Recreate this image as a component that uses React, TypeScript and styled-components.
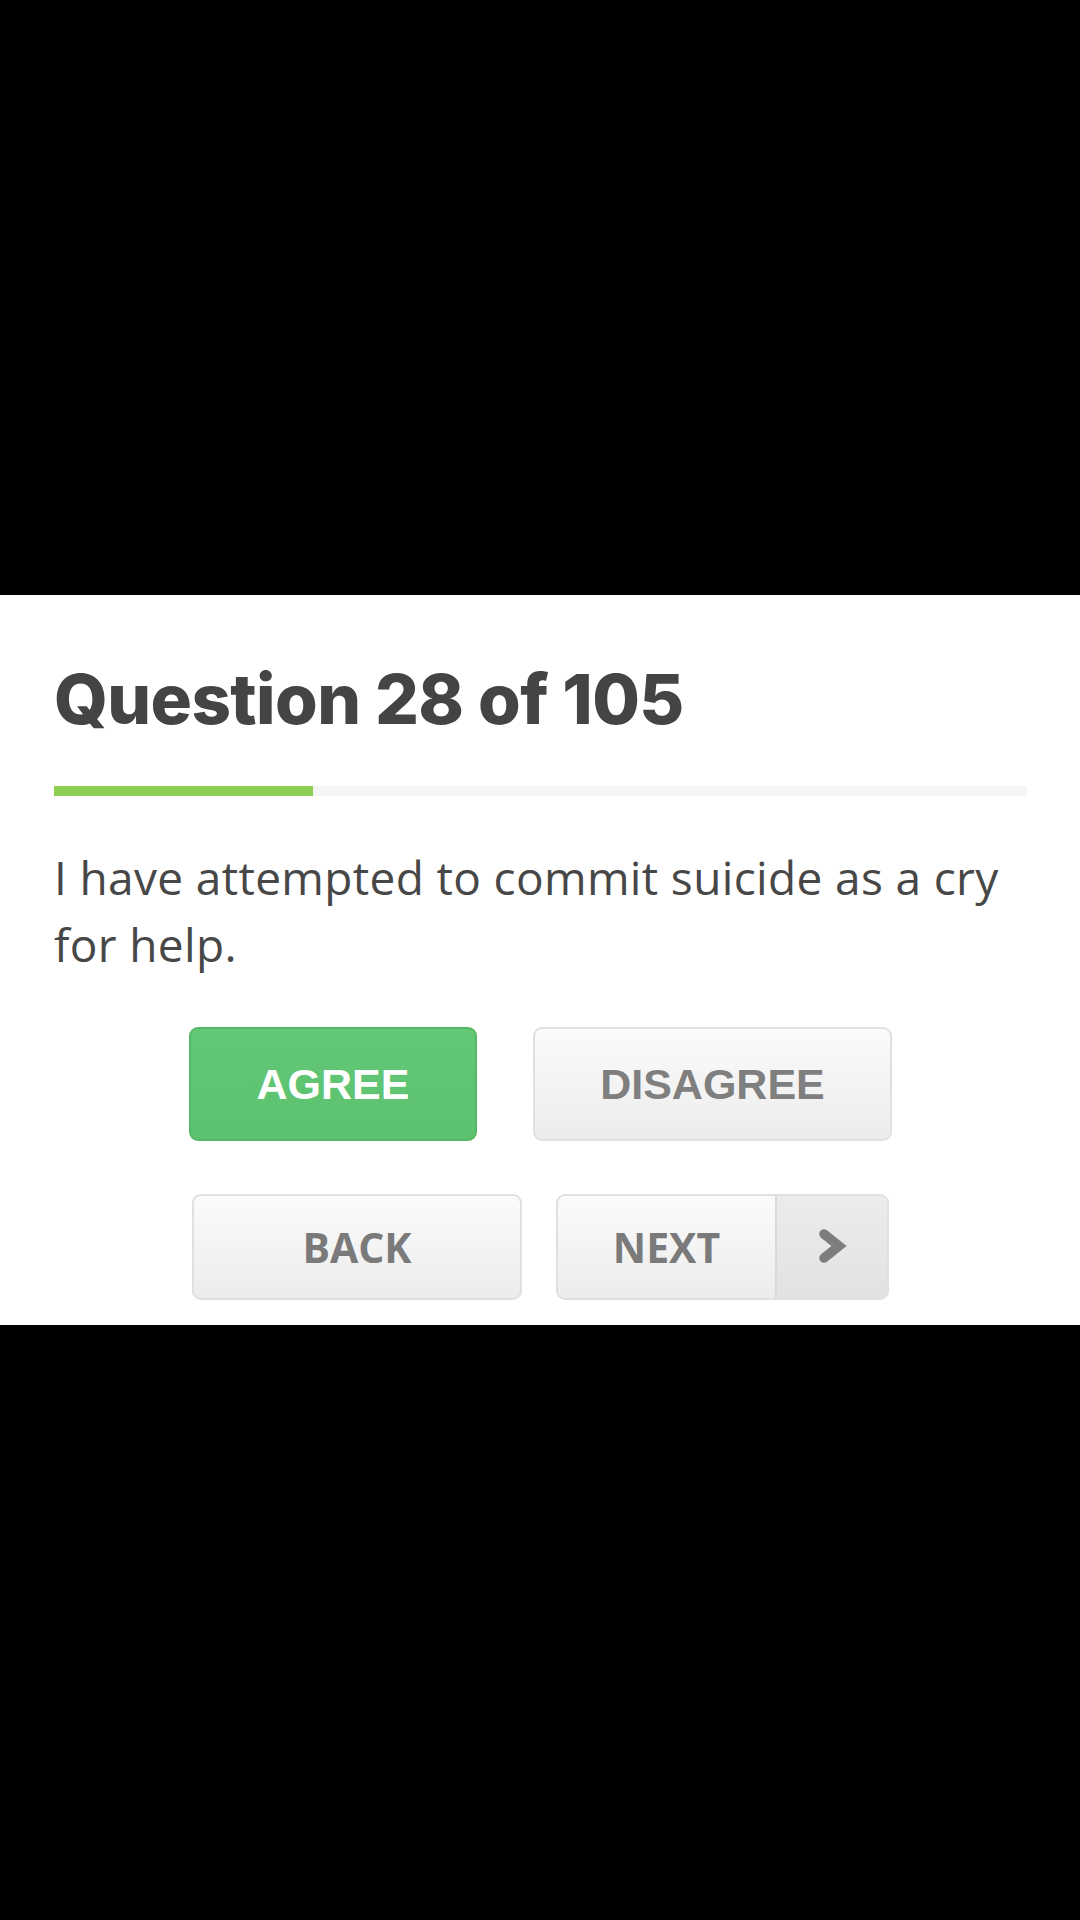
import styled, { createGlobalStyle } from "styled-components";

const GlobalStyle = createGlobalStyle`
  html, body {
    margin: 0;
    padding: 0;
    background: #000;
  }
  * {
    box-sizing: border-box;
  }
`;

const Screen = styled.div`
  min-height: 1920px;
  display: flex;
  align-items: center;
`;

const Panel = styled.section`
  width: 100%;
  height: 730px;
  background: #fff;
  padding: 63px 53px 25px 54px;
  display: flex;
  flex-direction: column;
`;

const Heading = styled.h1`
  margin: 0;
  font-family: Inter, "Open Sans", sans-serif;
  font-weight: 800;
  font-size: 69px;
  line-height: 83px;
  letter-spacing: -0.6px;
  color: #444;
`;

const ProgressTrack = styled.div`
  margin-top: 45px;
  height: 10px;
  background: #f5f5f5;
`;

const ProgressFill = styled.div`
  height: 100%;
  background: #8dcf50;
`;

const QuestionText = styled.p`
  margin: 48px 0 0;
  font-family: "Open Sans", sans-serif;
  font-size: 46px;
  line-height: 67px;
  letter-spacing: 0.35px;
  color: #474747;
`;

const ButtonRow = styled.div<{ $gap: number; $top: number }>`
  display: flex;
  justify-content: center;
  gap: ${(p) => p.$gap}px;
  margin-top: ${(p) => p.$top}px;
`;

const AnswerButton = styled.button<{ $primary?: boolean; $width: number }>`
  width: ${(p) => p.$width}px;
  height: 114px;
  border-radius: 9px;
  font-family: "Liberation Sans", Arial, sans-serif;
  font-weight: 700;
  font-size: 43px;
  padding: 0;
  cursor: pointer;
  color: ${(p) => (p.$primary ? "#fff" : "#7f7f7f")};
  border: 2px solid ${(p) => (p.$primary ? "#55b867" : "#e0e0e0")};
  background: ${(p) =>
    p.$primary
      ? "linear-gradient(#62c876, #5cc26f)"
      : "linear-gradient(#fbfbfb, #ececec)"};
`;

const NavButton = styled.button<{ $width: number }>`
  width: ${(p) => p.$width}px;
  height: 106px;
  display: flex;
  align-items: stretch;
  padding: 0;
  border: 2px solid #e0e0e0;
  border-radius: 9px;
  overflow: hidden;
  background: linear-gradient(#fbfbfb, #ececec);
  cursor: pointer;
`;

const NavLabel = styled.span`
  flex: 1;
  display: flex;
  align-items: center;
  justify-content: center;
  font-family: "Open Sans", sans-serif;
  font-weight: 700;
  font-size: 41px;
  color: #7a7a7a;
`;

const NavArrow = styled.span`
  width: 112px;
  display: flex;
  align-items: center;
  justify-content: center;
  border-left: 2px solid #d9d9d9;
  background: linear-gradient(#ececec, #e2e2e2);
`;

const Chevron = () => (
  <svg width="32" height="42" viewBox="0 0 32 42">
    <polyline
      points="8,8 23,20 8,32"
      fill="none"
      stroke="#7d7d7d"
      strokeWidth="9.5"
      strokeLinecap="round"
      strokeLinejoin="miter"
    />
  </svg>
);

const App = () => {
  const current = 28;
  const total = 105;
  const progress = (259 / 973) * 100;

  return (
    <>
      <GlobalStyle />
      <Screen>
        <Panel>
          <Heading>
            Question {current} of {total}
          </Heading>
          <ProgressTrack>
            <ProgressFill style={{ width: `${progress}%` }} />
          </ProgressTrack>
          <QuestionText>
            I have attempted to commit suicide as a cry for help.
          </QuestionText>
          <ButtonRow $gap={56} $top={49}>
            <AnswerButton $primary $width={288}>
              AGREE
            </AnswerButton>
            <AnswerButton $width={359}>DISAGREE</AnswerButton>
          </ButtonRow>
          <ButtonRow $gap={34} $top={53}>
            <NavButton $width={330}>
              <NavLabel>BACK</NavLabel>
            </NavButton>
            <NavButton $width={333}>
              <NavLabel>NEXT</NavLabel>
              <NavArrow>
                <Chevron />
              </NavArrow>
            </NavButton>
          </ButtonRow>
        </Panel>
      </Screen>
    </>
  );
};

export default App;
